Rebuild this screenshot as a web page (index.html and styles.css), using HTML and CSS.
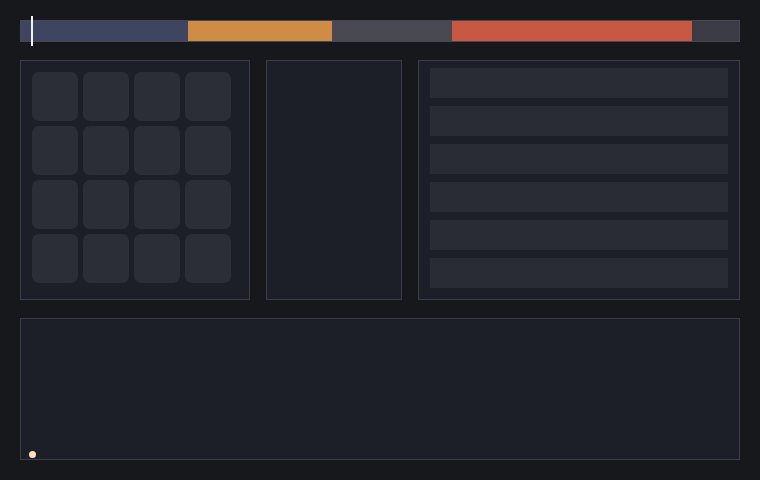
FILE: index.html
```html
<!DOCTYPE html>
<html lang="en">
<head>
    <meta charset="UTF-8">
    <meta name="viewport" content="width=device-width, initial-scale=1.0">
    <title>Board</title>
    <link rel="stylesheet" href="styles.css">
</head>
<body>
    <div class="timeline">
        <div class="seg seg-blue"></div>
        <div class="seg seg-orange"></div>
        <div class="seg seg-gray"></div>
        <div class="seg seg-red"></div>
        <div class="marker"></div>
    </div>

    <div class="panels">
        <div class="panel grid-panel">
            <div class="tiles">
                <div class="tile"></div><div class="tile"></div><div class="tile"></div><div class="tile"></div>
                <div class="tile"></div><div class="tile"></div><div class="tile"></div><div class="tile"></div>
                <div class="tile"></div><div class="tile"></div><div class="tile"></div><div class="tile"></div>
                <div class="tile"></div><div class="tile"></div><div class="tile"></div><div class="tile"></div>
            </div>
        </div>
        <div class="panel middle-panel"></div>
        <div class="panel list-panel">
            <div class="row"></div>
            <div class="row"></div>
            <div class="row"></div>
            <div class="row"></div>
            <div class="row"></div>
            <div class="row"></div>
        </div>
    </div>

    <div class="panel bottom-panel">
        <div class="dot"></div>
    </div>
</body>
</html>
```

FILE: styles.css
```css
body{
    margin: 0;
    padding: 20px;
    background-color: #17181c;
    font-family: "Inter", sans-serif;
}

.timeline{
    position: relative;
    display: flex;
    height: 20px;
    border: 1px solid #474751;
    background-color: #3c3b46;
}
.seg{
    height: 100%;
}
.seg-blue{
    width: 167px;
    background-color: #3d4560;
}
.seg-orange{
    width: 144px;
    background-color: #cf8c45;
}
.seg-gray{
    width: 120px;
    background-color: #4a4851;
}
.seg-red{
    width: 240px;
    background-color: #c85842;
}
.marker{
    position: absolute;
    left: 10px;
    top: -5px;
    width: 2px;
    height: 30px;
    background-color: #f4f4f4;
}

.panels{
    display: flex;
    gap: 16px;
    margin-top: 18px;
    height: 240px;
}
.panel{
    box-sizing: border-box;
    background-color: #1c1f27;
    border: 1px solid #3a3c46;
}
.grid-panel{
    width: 230px;
    padding: 11px 11px;
}
.tiles{
    display: grid;
    grid-template-columns: repeat(4, 46px);
    grid-auto-rows: 49px;
    gap: 5px;
}
.tile{
    background-color: #2b2e37;
    border-radius: 7px;
}
.middle-panel{
    width: 136px;
}
.list-panel{
    flex: 1;
    display: flex;
    flex-direction: column;
    gap: 8px;
    padding: 7px 11px;
}
.row{
    height: 30px;
    background-color: #292c35;
}

.bottom-panel{
    position: relative;
    margin-top: 18px;
    height: 142px;
}
.dot{
    position: absolute;
    left: 8px;
    bottom: 1px;
    width: 7px;
    height: 7px;
    border-radius: 50%;
    background-color: #fde2bf;
}
```
